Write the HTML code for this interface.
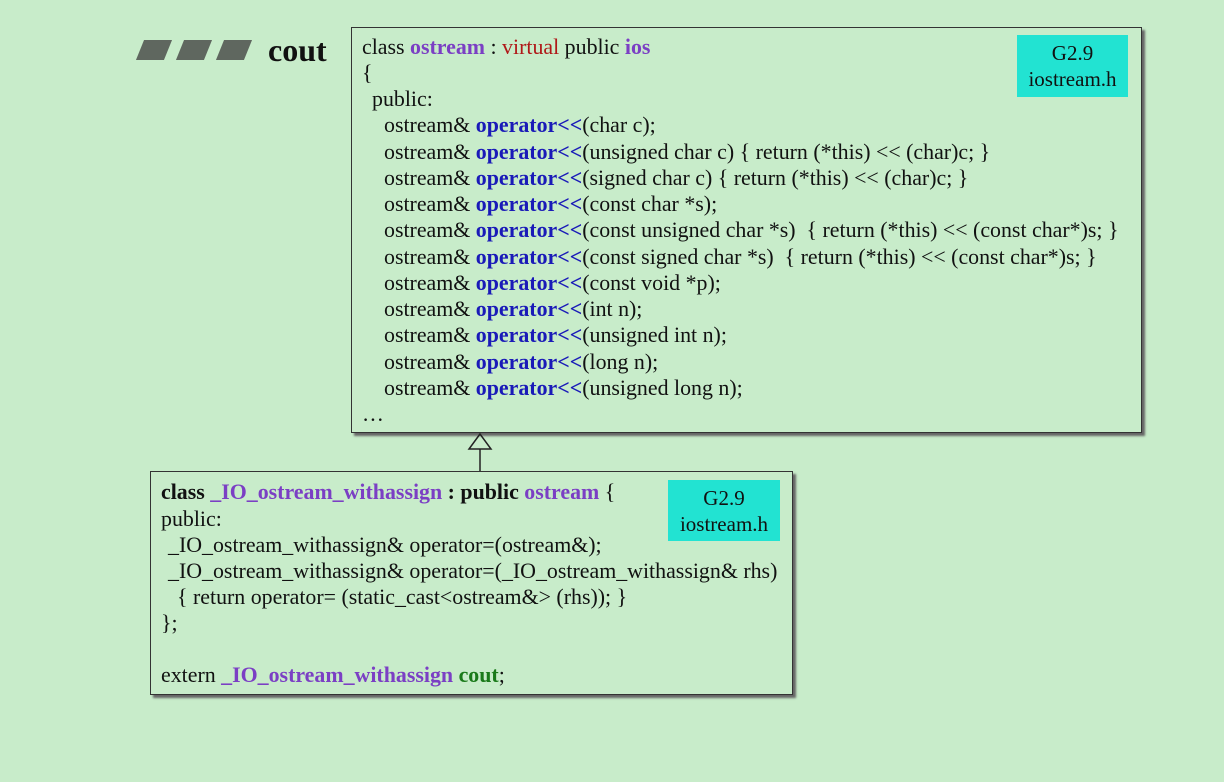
<!DOCTYPE html><html><head><style>
body{margin:0;width:1224px;height:782px;background:#c8ecca;position:relative;overflow:hidden;font-family:"Liberation Serif",serif;color:#111}
.box{position:absolute;border:1.5px solid #333;box-shadow:3px 3px 2px #666;}
.l{position:absolute;font-size:21.9px;white-space:pre;line-height:26px}
.p{color:#7b3fc4;font-weight:bold}.r{color:#b01818}.b{color:#1a1ab8;font-weight:bold}.g{color:#1a7a1a;font-weight:bold}
.tag{position:absolute;background:#22e3d2;font-size:21px;text-align:center;line-height:26px}
.pg{position:absolute;top:40px;width:28px;height:20px;background:#5f675f;transform:skewX(-22deg)}
</style></head><body>
<div class="pg" style="left:140px"></div><div class="pg" style="left:180px"></div><div class="pg" style="left:220px"></div>
<div style="position:absolute;left:268px;top:32px;font-size:32px;font-weight:bold">cout</div>
<div class="box" style="left:351px;top:27px;width:789px;height:404px;"></div>
<div class="tag" style="left:1017px;top:35px;width:111px;height:62px;padding-top:5px;box-sizing:border-box">G2.9<br>iostream.h</div>
<div class="l" style="left:362px;top:34px">class <span class="p">ostream</span> : <span class="r">virtual</span> public <span class="p">ios</span></div>
<div class="l" style="left:362px;top:60px">{</div>
<div class="l" style="left:372px;top:86px">public:</div>
<div class="l" style="left:384px;top:112px">ostream&amp; <span class="b">operator&lt;&lt;</span>(char c);</div>
<div class="l" style="left:384px;top:139px">ostream&amp; <span class="b">operator&lt;&lt;</span>(unsigned char c) { return (*this) &lt;&lt; (char)c; }</div>
<div class="l" style="left:384px;top:165px">ostream&amp; <span class="b">operator&lt;&lt;</span>(signed char c) { return (*this) &lt;&lt; (char)c; }</div>
<div class="l" style="left:384px;top:191px">ostream&amp; <span class="b">operator&lt;&lt;</span>(const char *s);</div>
<div class="l" style="left:384px;top:217px">ostream&amp; <span class="b">operator&lt;&lt;</span>(const unsigned char *s)  { return (*this) &lt;&lt; (const char*)s; }</div>
<div class="l" style="left:384px;top:244px">ostream&amp; <span class="b">operator&lt;&lt;</span>(const signed char *s)  { return (*this) &lt;&lt; (const char*)s; }</div>
<div class="l" style="left:384px;top:270px">ostream&amp; <span class="b">operator&lt;&lt;</span>(const void *p);</div>
<div class="l" style="left:384px;top:296px">ostream&amp; <span class="b">operator&lt;&lt;</span>(int n);</div>
<div class="l" style="left:384px;top:322px">ostream&amp; <span class="b">operator&lt;&lt;</span>(unsigned int n);</div>
<div class="l" style="left:384px;top:349px">ostream&amp; <span class="b">operator&lt;&lt;</span>(long n);</div>
<div class="l" style="left:384px;top:375px">ostream&amp; <span class="b">operator&lt;&lt;</span>(unsigned long n);</div>
<div class="l" style="left:362px;top:401px">…</div>
<svg style="position:absolute;left:466px;top:432px" width="28" height="40"><polygon points="14,2 3,17 25,17" fill="none" stroke="#222" stroke-width="1.5"/><line x1="14" y1="17" x2="14" y2="40" stroke="#222" stroke-width="1.5"/></svg>
<div class="box" style="left:150px;top:471px;width:641px;height:222px;"></div>
<div class="tag" style="left:668px;top:480px;width:112px;height:61px;padding-top:5px;box-sizing:border-box">G2.9<br>iostream.h</div>
<div class="l" style="left:161px;top:479px"><b>class </b><span class="p">_IO_ostream_withassign</span><b> : public </b><span class="p">ostream</span> {</div>
<div class="l" style="left:161px;top:506px">public:</div>
<div class="l" style="left:168px;top:532px">_IO_ostream_withassign&amp; operator=(ostream&amp;);</div>
<div class="l" style="left:168px;top:558px">_IO_ostream_withassign&amp; operator=(_IO_ostream_withassign&amp; rhs)</div>
<div class="l" style="left:177px;top:584px">{ return operator= (static_cast&lt;ostream&amp;&gt; (rhs)); }</div>
<div class="l" style="left:161px;top:610px">};</div>
<div class="l" style="left:161px;top:662px">extern <span class="p">_IO_ostream_withassign</span> <span class="g">cout</span>;</div>
</body></html>
